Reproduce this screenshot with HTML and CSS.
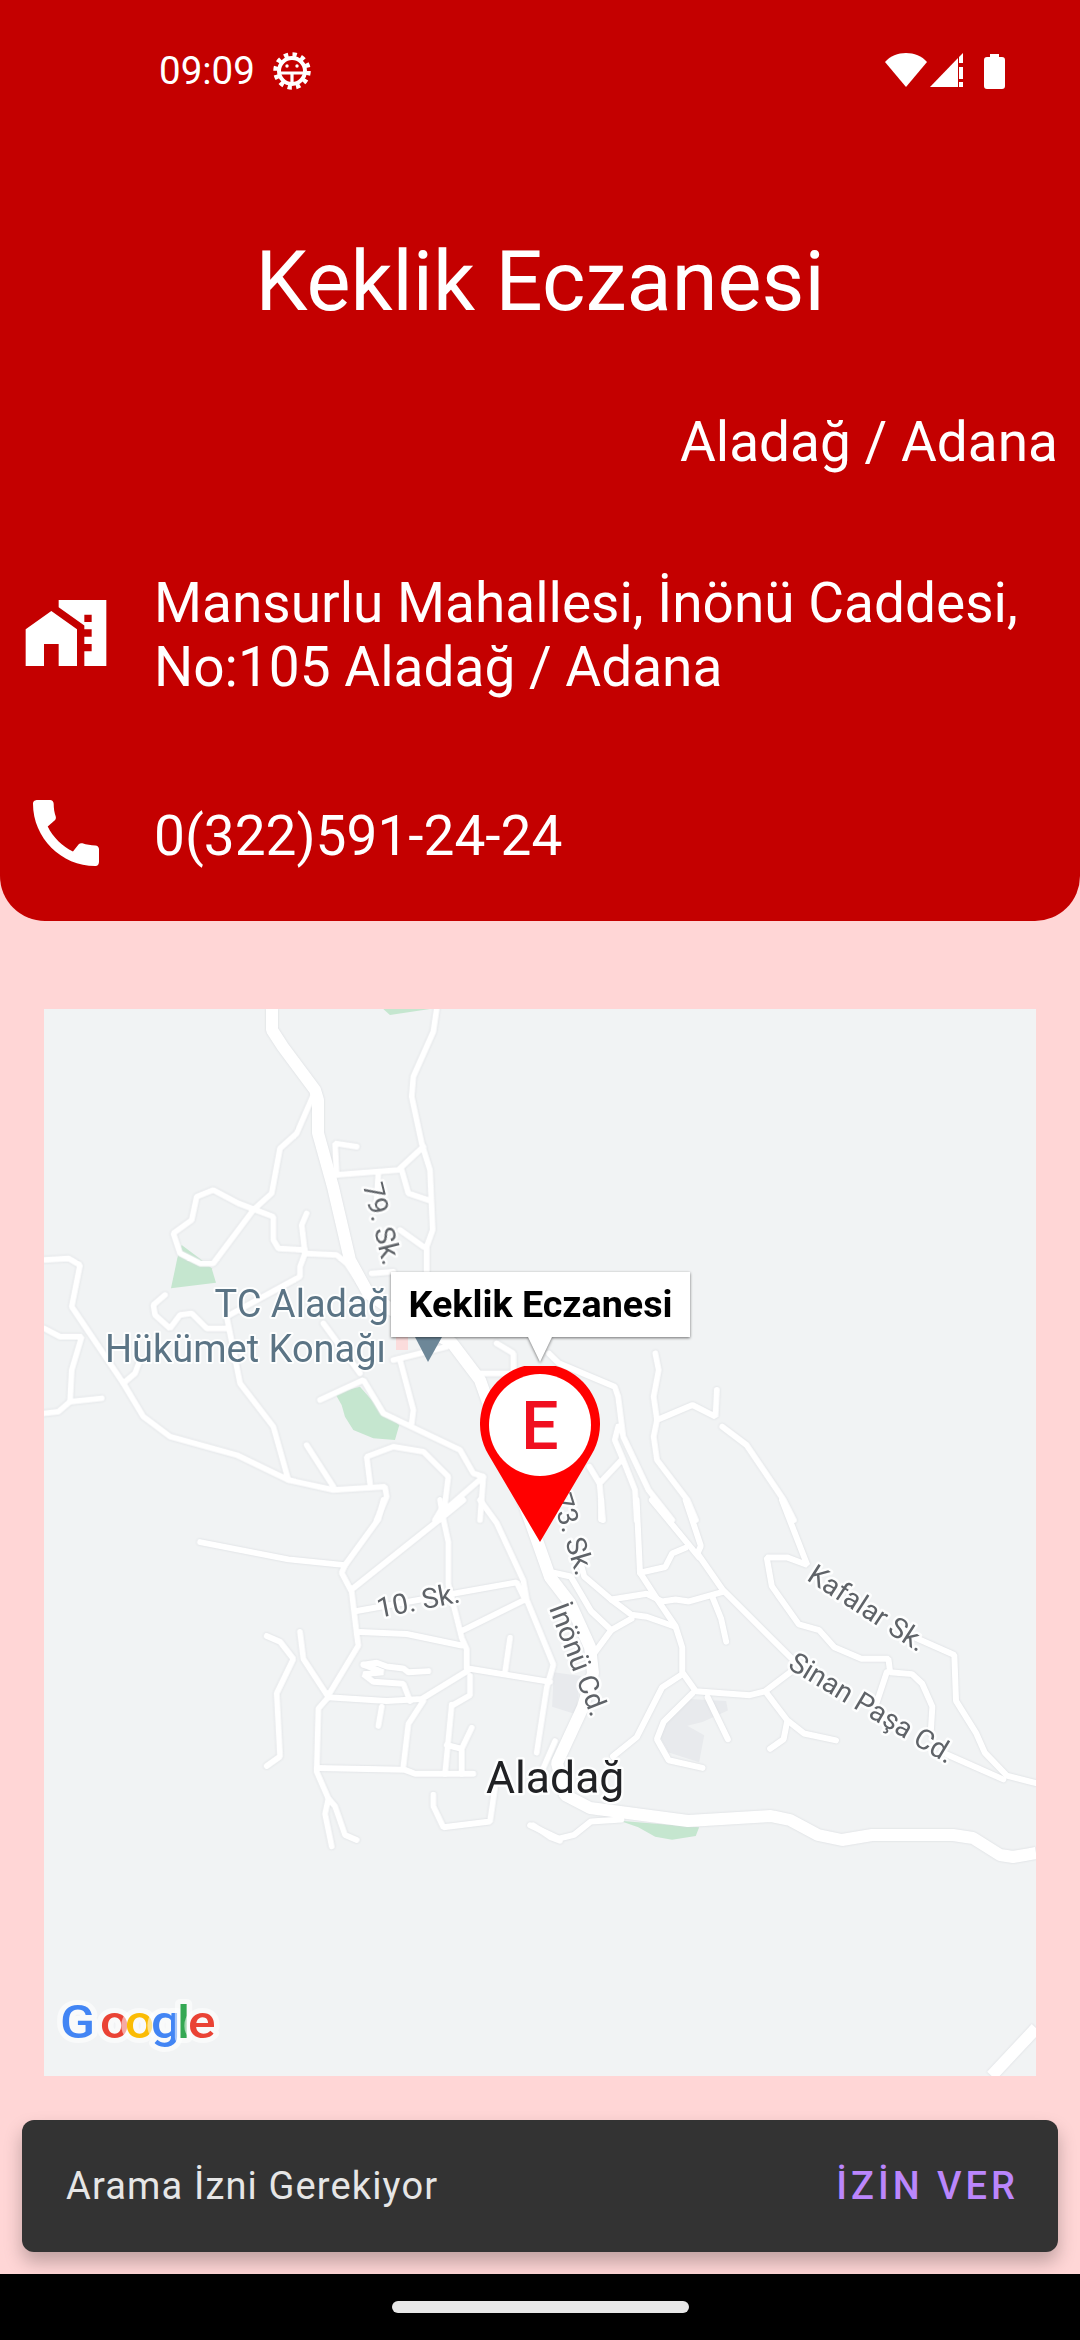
FILE: index.html
```html
<!DOCTYPE html>
<html lang="tr">
<head>
<meta charset="utf-8">
<title>Keklik Eczanesi</title>
<link rel="stylesheet" href="styles.css">
</head>
<body>
<div class="screen">
  <header class="head">
    <div class="status">
      <span class="clock">09:09</span>
      <svg class="gear" viewBox="0 0 40 40">
        <circle class="gear-teeth" cx="20" cy="20" r="16.5"/>
        <circle class="gear-ring" cx="20" cy="20" r="13"/>
        <path class="gear-line" d="M7 22H33M20 22V33"/>
        <circle class="gear-eye" cx="15" cy="15" r="1.7"/>
        <circle class="gear-eye" cx="25" cy="15" r="1.7"/>
      </svg>
      <span class="spacer"></span>
      <svg class="wifi" viewBox="0 0 42 34"><path d="M21 34L0 9C5 3 13 0 21 0S37 3 42 9Z"/></svg>
      <svg class="signal" viewBox="0 0 33 34"><path d="M28 5V34H0Z"/><path d="M33 0V10H29V4ZM29 14H33V26H29ZM29 29H33V34H29Z"/></svg>
      <svg class="battery" viewBox="0 0 21 35"><path d="M6 0H15V3H18Q21 3 21 6V32Q21 35 18 35H3Q0 35 0 32V6Q0 3 3 3H6Z"/></svg>
    </div>
    <h1 class="title">Keklik Eczanesi</h1>
    <p class="region">Aladağ / Adana</p>
    <div class="row row-address">
      <svg class="ico" viewBox="0 0 24 24"><path d="M1 11v10h5v-6h4v6h5V11L8 6z"/><path d="M10 3v1.97l7 5V11h2v2h-2v2h2v2h-2v4h6V3H10zm9 6h-2V7h2v2z"/></svg>
      <p class="row-text">Mansurlu Mahallesi, İnönü Caddesi,<br>No:105 Aladağ / Adana</p>
    </div>
    <div class="row row-phone">
      <svg class="ico" viewBox="0 0 24 24"><path d="M20.01 15.38c-1.23 0-2.42-.2-3.53-.56-.35-.12-.74-.03-1.01.24l-1.57 1.97c-2.83-1.35-5.48-3.9-6.89-6.83l1.95-1.66c.27-.28.35-.67.24-1.02-.37-1.11-.56-2.3-.56-3.53 0-.54-.45-.99-.99-.99H4.19C3.65 3 3 3.24 3 3.99 3 13.28 10.73 21 20.01 21c.71 0 .99-.63.99-1.18v-3.45c0-.54-.45-.99-.99-.99z"/></svg>
      <p class="row-text">0(322)591-24-24</p>
    </div>
  </header>

  <section class="map">
    <svg class="map-svg" viewBox="44 1009 992 1067">
      <g class="parks">
        <g transform="translate(40 1000) scale(.3333)">
          <path d="M425 735L485 780L515 805L528 848L393 865L412 775Z"/>
          <path d="M885 1180L960 1160L1030 1240L1078 1275L1065 1320L1000 1315L940 1290L915 1250L905 1215Z"/>
          <path d="M1030 27H1170L1050 45Z"/>
        </g>
        <g transform="translate(520 1500) scale(.338 .3827)">
          <path d="M295 838L530 855L520 878L450 888L400 880L350 855Z"/>
        </g>
      </g>
      <g class="blocks" transform="translate(520 1500) scale(.338 .3827)">
        <path d="M100 450L180 460L165 560L95 540Z"/>
        <path d="M500 520L610 525L615 550L540 580L495 590L545 615L530 685L440 660L415 620L430 570Z"/>
      </g>
      <path class="bldg" d="M396 1337H408V1350H396Z"/>
      <g class="roads">
        <g transform="translate(40 1000) scale(.3333)">
          <path d="M1190 27L1180 95L1120 230L1115 290L1145 430L1170 510L1178 690L1160 740L1160 815"/>
          <path d="M1150 440L1075 510L885 525"/>
          <path d="M950 440L885 430L890 525"/>
          <path d="M1015 520L1010 600"/>
          <path d="M1085 510L1105 580L1165 600"/>
          <path d="M1080 690L1150 740"/>
          <path d="M820 285L770 400L720 445L695 580L640 630L520 790L480 790L420 760L400 700L455 660L470 590L520 570L595 610L700 650L700 720L715 745L795 750"/>
          <path d="M800 640L785 675L795 760L780 800L780 830L560 950L570 1000L600 1150L700 1280L745 1440"/>
          <path d="M795 760L890 765L920 790L960 850"/>
          <path d="M12 780L85 775L120 795L95 920L250 1150L310 1250L390 1310L590 1365L745 1440L880 1470L1035 1460L1040 1490L1010 1560"/>
          <path d="M12 985L60 1010L125 1010L95 1110L90 1205L55 1235L12 1240"/>
          <path d="M90 1205L185 1195"/>
          <path d="M375 885L340 915L345 945L390 985L420 945L455 940L500 985L560 985"/>
          <path d="M250 1150L285 1120L300 1080"/>
          <path d="M800 1335L880 1460"/>
          <path d="M990 1450L980 1370L1060 1340L1150 1355L1225 1430L1215 1510L1185 1560"/>
          <path d="M840 1200L970 1140L1030 1240L1260 1350L1300 1420L1330 1430L1320 1560"/>
          <path d="M1080 1080L1120 1230L1115 1270"/>
          <path d="M1330 1430L1215 1530"/>
          <path d="M960 1120L850 970"/>
          <path d="M1060 1080L1220 1040"/>
          <path d="M1300 1120L1420 1120L1420 1060L1370 1030"/>
          <path d="M995 820L1060 815"/>
        </g>
        <g transform="translate(520 1000) scale(.338 .3333)">
          <path d="M85 1060L115 1090L280 1160L290 1190L305 1310L380 1470L450 1560"/>
          <path d="M290 1280L280 1320L305 1380L340 1470L345 1560"/>
          <path d="M300 1380L235 1450L245 1560"/>
          <path d="M205 1400L235 1450"/>
          <path d="M400 1060L410 1110L395 1190L405 1260L395 1310L405 1380L495 1500L520 1560"/>
          <path d="M405 1260L510 1215L578 1250L582 1170"/>
          <path d="M598 1280L670 1335L780 1500L810 1560"/>
        </g>
        <g transform="translate(40 1500) scale(.3333 .3827)">
          <path d="M1030 0L1015 50L915 170L905 190L935 240L950 350L955 380L865 510"/>
          <path d="M480 110L745 155L915 170"/>
          <path d="M1270 0L1200 50L940 230"/>
          <path d="M1200 0L1210 50L1225 110L1225 220L1265 360L1280 390L1280 440"/>
          <path d="M950 290L1430 215L1455 260L1270 340"/>
          <path d="M960 345L1100 350L1265 380"/>
          <path d="M1320 0L1370 60L1450 210L1460 260L1540 430L1520 490L1490 660"/>
          <path d="M1285 440L1530 475"/>
          <path d="M1410 360L1395 450"/>
          <path d="M1285 445L1145 520L1040 525L865 515"/>
          <path d="M680 355L720 370L760 415L710 505L720 670L680 695"/>
          <path d="M780 345L790 415L865 515L835 545L830 710L865 780L855 820L875 905"/>
          <path d="M865 780L885 800L915 875L950 888"/>
          <path d="M830 700L1095 705L1125 715L1300 715"/>
          <path d="M1150 525L1105 585L1090 695"/>
          <path d="M1025 540L1015 590"/>
          <path d="M1295 595L1265 650L1265 715"/>
          <path d="M1235 535L1215 715"/>
          <path d="M1290 460L1290 510L1240 535"/>
          <path d="M1220 640L1265 650"/>
          <path d="M970 430L1010 425L1040 435L1090 440L1105 450L1165 447"/>
          <path d="M970 430L1030 450L970 455L1000 475L1090 480L1110 525"/>
          <path d="M1180 770L1180 800L1210 855L1350 840L1365 750"/>
          <path d="M1480 850L1530 880L1560 890"/>
          <path d="M1545 630L1500 720"/>
        </g>
        <g transform="translate(520 1500) scale(.338 .3827)">
          <path d="M490 0L535 120L525 140L600 235L810 420"/>
          <path d="M345 0L355 190L410 265L460 330L480 385L480 450L520 500L680 510L725 500L800 450"/>
          <path d="M240 0L240 50"/>
          <path d="M355 190L430 175L450 140L490 125"/>
          <path d="M390 0L530 150"/>
          <path d="M175 150L190 200L270 260L330 300L375 305L455 330"/>
          <path d="M100 190L150 200L210 290L270 340"/>
          <path d="M270 260L375 245L420 265L460 260L500 265L600 240"/>
          <path d="M330 310L270 340L220 400"/>
          <path d="M480 455L420 490L345 620L275 670"/>
          <path d="M510 505L425 580L405 625L440 680L540 700"/>
          <path d="M555 515L615 625"/>
          <path d="M570 255L595 310L610 370"/>
          <path d="M730 505L790 575L840 610L935 628"/>
          <path d="M790 580L780 625L740 650"/>
          <path d="M775 0L850 170L790 150L730 150L745 225L825 325L885 340L930 385L1010 415L1090 415L1095 450L1160 455L1190 480L1220 540L1215 610"/>
          <path d="M1085 450L1055 530"/>
          <path d="M1170 360L1285 405L1290 525L1350 610L1375 660L1440 720L1527 740"/>
          <path d="M1250 660L1430 730"/>
          <path d="M30 850L115 885L160 875L210 840L300 835"/>
          <path class="rd-big" d="M1527 1380L1395 1505"/>
        </g>
        <path class="rd-big" d="M272 1009L272 1030L283 1047L315 1090L318 1100L318 1133L333 1187L350 1260L368 1293L392 1310L452 1343L480 1380L538 1543L550 1577L570 1603L590 1647L593 1673L583 1707L557 1763L565 1795L590 1808L688 1821L771 1816L790 1820L818 1835L842 1840L872 1835L953 1835L973 1838L1000 1855L1013 1857L1036 1853"/>
      </g>

      <path class="poi" d="M415 1337H442L428 1362Z"/>

      <text class="lbl-poi" text-anchor="end" x="389" y="1317">TC Aladağ</text>
      <text class="lbl-poi" text-anchor="end" x="386" y="1362">Hükümet Konağı</text>
      <text class="lbl-place" x="486" y="1793">Aladağ</text>
      <text class="lbl-st" text-anchor="middle" transform="translate(373 1226) rotate(76)">79. Sk.</text>
      <text class="lbl-st" text-anchor="middle" transform="translate(420 1610) rotate(-11)">10. Sk.</text>
      <text class="lbl-st" text-anchor="middle" transform="translate(564 1537) rotate(73)">73. Sk.</text>
      <text class="lbl-st" text-anchor="middle" transform="translate(570 1663) rotate(69)">İnönü Cd.</text>
      <text class="lbl-st" text-anchor="middle" transform="translate(862 1616) rotate(33)">Kafalar Sk.</text>
      <text class="lbl-st" text-anchor="middle" transform="translate(867 1716) rotate(31)">Sinan Paşa Cd.</text>
      <text class="g-logo" y="2038" transform="scale(1.12 1)"><tspan class="g-b" x="53.6">G</tspan><tspan class="g-r" x="89.3">o</tspan><tspan class="g-y" x="111.6">o</tspan><tspan class="g-b" x="134.8">g</tspan><tspan class="g-g" x="158">l</tspan><tspan class="g-r" x="167.9">e</tspan></text>
    </svg>

    <div class="bubble">Keklik Eczanesi</div>
    <svg class="pin" viewBox="0 0 120 176">
      <path class="pin-body" d="M60 176L8.4 88.5A60 60 0 1 1 111.6 88.5Z"/>
      <circle class="pin-hole" cx="60" cy="59" r="51"/>
      <text class="pin-e" x="60" y="83" text-anchor="middle">E</text>
    </svg>
  </section>

  <div class="snack">
    <span class="snack-msg">Arama İzni Gerekiyor</span>
    <span class="snack-act">İZİN VER</span>
  </div>
  <nav class="navbar"><span class="handle"></span></nav>
</div>
</body>
</html>
```

FILE: styles.css
```css
* { box-sizing: border-box; }
html, body { margin: 0; padding: 0; }
body { font-family: Roboto, "Noto Sans", sans-serif; background: #ffd6d6; }
.screen { width: 1080px; height: 2340px; display: flex; flex-direction: column; overflow: hidden; }

.head { height: 921px; background: #c40000; color: #fff; border-radius: 0 0 45px 45px; flex: none; }
.status { height: 48px; margin-top: 47px; padding: 0 75px 0 159px; display: flex; align-items: center; }
.clock { font-size: 38.5px; line-height: 48px; }
.gear { width: 40px; height: 40px; margin-left: 17px; }
.gear-teeth { fill: none; stroke: #fff; stroke-width: 4.5; stroke-dasharray: 4.3 4.34; }
.gear-ring { fill: none; stroke: #fff; stroke-width: 4; }
.gear-line { fill: none; stroke: #fff; stroke-width: 3.2; }
.gear-eye { fill: #fff; }
.spacer { flex: 1; }
.wifi { width: 42px; height: 34px; margin-bottom: 2px; fill: #fff; }
.signal { width: 33px; height: 34px; margin-bottom: 2px; margin-left: 3px; fill: #fff; }
.battery { width: 21px; height: 35px; margin-left: 21px; fill: #fff; }

.title { margin: 140px 0 0; font-size: 83px; line-height: 94px; font-weight: 400; text-align: center; }
.region { margin: 81px 22px 0 0; font-size: 55px; line-height: 64px; text-align: right; }

.row { display: flex; align-items: center; padding-left: 22px; }
.ico { width: 88px; height: 88px; margin-bottom: 5px; flex: none; fill: #fff; }
.row-text { margin: 0 0 0 44px; font-size: 55px; line-height: 64px; }
.row-address { margin-top: 97px; }
.row-phone { margin-top: 90px; }

.map { position: relative; width: 992px; height: 1067px; margin: 88px 0 0 44px; background: #f1f3f4; overflow: hidden; flex: none; }
.map-svg { display: block; width: 992px; height: 1067px; }
.parks { fill: #c5e6cf; }
.blocks { fill: #e8eaed; }
.bldg { fill: #fbdcdc; }
.roads { fill: none; stroke: #fff; stroke-width: 6; stroke-linecap: round; stroke-linejoin: bevel; filter: drop-shadow(0 0 1px #d5d8dc); }
.roads path { vector-effect: non-scaling-stroke; }
.roads .rd-big { stroke-width: 12; stroke-linecap: butt; }
.poi { fill: #6d8798; }
.lbl-poi, .lbl-place, .lbl-st { font-family: Roboto, sans-serif; paint-order: stroke; stroke: #fff; stroke-linejoin: round; stroke-opacity: .85; }
.lbl-poi { font-size: 38px; fill: #5b7485; stroke-width: 4; }
.lbl-place { font-size: 44.5px; fill: #202124; stroke-width: 5; }
.lbl-st { font-size: 28px; fill: #5f6368; stroke-width: 5; }
.g-logo { font-family: Roboto, sans-serif; font-size: 46px; font-weight: 500; paint-order: stroke; stroke: rgba(255,255,255,.55); stroke-width: 10; stroke-linejoin: round; }
.g-b { fill: #4285f4; }
.g-r { fill: #ea4335; }
.g-y { fill: #fbbc05; }
.g-g { fill: #34a853; }

.bubble { position: absolute; left: 347px; top: 263px; width: 299px; height: 65px; background: #fff; color: #000; font-size: 37.7px; font-weight: 700; line-height: 65px; text-align: center; filter: drop-shadow(0 1px 1.5px rgba(0,0,0,.55)); }
.bubble::after { content: ""; position: absolute; left: 137px; top: 65px; border-style: solid; border-width: 25px 12px 0; border-color: #fff transparent transparent; }
.pin { position: absolute; left: 436px; top: 357px; width: 120px; height: 176px; }
.pin-body { fill: #f00; }
.pin-hole { fill: #fff; }
.pin-e { font-family: Roboto, sans-serif; font-size: 66px; font-weight: 500; fill: #f01020; }

.snack { height: 132px; margin: 44px 22px 0; padding: 0 39px 0 44px; display: flex; align-items: center; justify-content: space-between; background: #333; border-radius: 12px; box-shadow: 0 10px 18px rgba(0,0,0,.25); flex: none; }
.snack-msg { font-size: 38px; letter-spacing: 1.15px; color: #e6e6e6; }
.snack-act { font-size: 38px; font-weight: 500; letter-spacing: 4px; color: #bb86fc; }

.navbar { height: 66px; margin-top: 22px; background: #000; display: flex; justify-content: center; padding-top: 27px; flex: none; position: relative; }
.handle { width: 297px; height: 12px; background: #e8e8e8; border-radius: 6px; }
```
